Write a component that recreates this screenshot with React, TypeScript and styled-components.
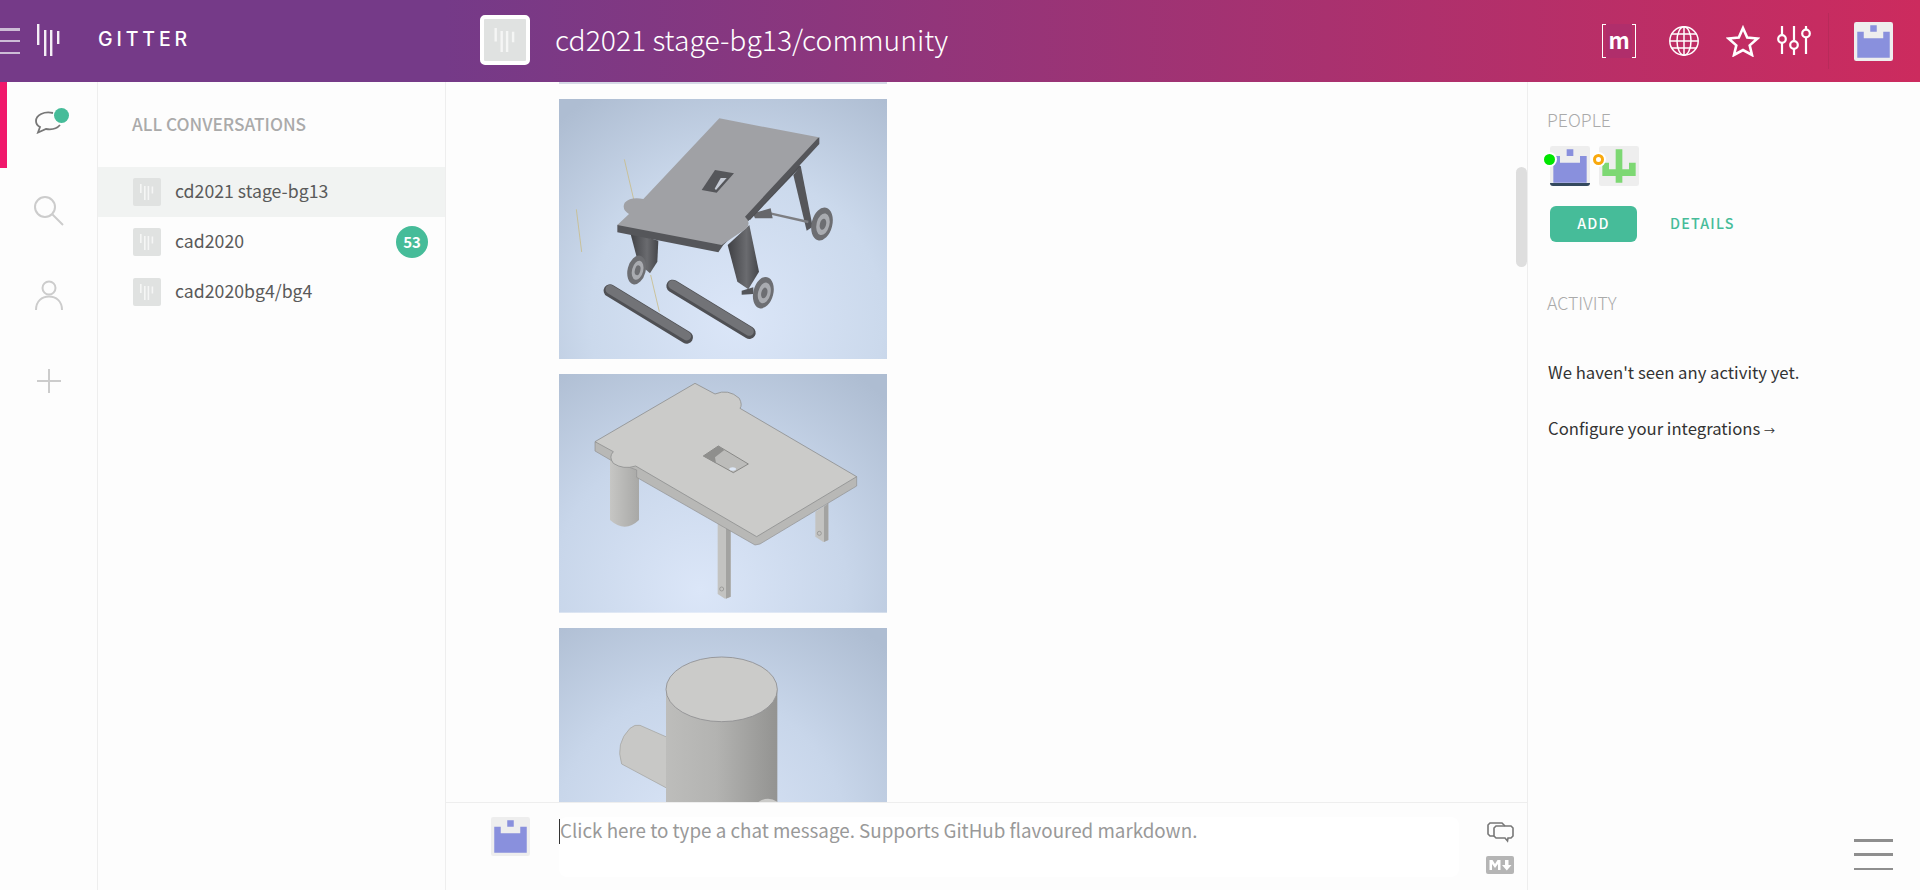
import React from 'react'
import styled, { createGlobalStyle } from 'styled-components'

const sans = `"Noto Sans CJK SC", "Noto Sans", sans-serif`

const GlobalStyle = createGlobalStyle`
  html, body, #root {
    height: 100%;
    margin: 0;
  }
  body {
    overflow: hidden;
    background: #fdfdfd;
    font-family: ${sans};
  }
`

const Page = styled.div`
  height: 100vh;
  display: flex;
  flex-direction: column;
`

const Header = styled.header`
  height: 82px;
  flex: none;
  display: flex;
  align-items: center;
  background: linear-gradient(to right, #753a88 445px, #cc2b5e 100%);
  color: #fff;
`

const Brand = styled.div`
  width: 445px;
  flex: none;
  display: flex;
  align-items: center;
`

const Hamburger = styled.div<{ $color: string; $width: number; $height: number }>`
  width: ${p => p.$width}px;
  height: ${p => p.$height}px;
  display: flex;
  flex-direction: column;
  justify-content: space-between;

  i {
    display: block;
    height: 2.5px;
    background: ${p => p.$color};
  }
`

const BrandMark = styled.svg`
  margin-left: 17px;
  width: 23px;
  height: 33px;
  margin-top: -1px;
`

const BrandName = styled.span`
  margin-left: 38px;
  padding-bottom: 4px;
  font-family: Inter, sans-serif;
  font-size: 19.5px;
  font-weight: 500;
  letter-spacing: 3.9px;
`

const RoomAvatar = styled.div`
  width: 50px;
  height: 50px;
  box-sizing: border-box;
  border: 4px solid #fff;
  border-radius: 5px;
  background: #e0e2e1;
  display: flex;
  align-items: center;
  justify-content: center;
  margin: 0 0 2px 35px;
`

const RoomTitle = styled.h1`
  margin: 0 0 6px 25px;
  font-size: 28.3px;
  font-weight: 300;
  flex: 1;
`

const HeaderIcons = styled.div`
  display: flex;
  align-items: center;
  height: 56px;
  margin-right: 27px;
`

const MatrixMark = styled.div`
  width: 34px;
  height: 34px;
  box-sizing: border-box;
  border: 1px solid #fff;
  position: relative;
  display: flex;
  align-items: center;
  justify-content: center;
  font-size: 22px;
  font-weight: 700;
  line-height: 1;
  margin-right: 32px;
  padding-bottom: 5px;

  &::before {
    content: '';
    position: absolute;
    top: -1px;
    bottom: -1px;
    left: 3px;
    right: 3px;
    background: #b02e6b;
  }

  span {
    position: relative;
  }
`

const HeaderIcon = styled.svg<{ $gap: number }>`
  margin-right: ${p => p.$gap}px;
  flex: none;
`

const HeaderDivider = styled.div`
  width: 1px;
  height: 56px;
  background: #b82a5a;
  margin: 0 25px 0 17px;
`

const Columns = styled.div`
  flex: 1;
  min-height: 0;
  display: flex;
`

const Rail = styled.nav`
  width: 98px;
  flex: none;
  box-sizing: border-box;
  border-right: 1px solid #eeeeee;
  display: flex;
  flex-direction: column;
`

const RailItem = styled.div<{ $active?: boolean }>`
  height: ${p => (p.$active ? 86 : 85)}px;
  display: flex;
  align-items: center;
  justify-content: center;
  position: relative;
  box-sizing: border-box;
  border-left: 7px solid ${p => (p.$active ? '#f0186b' : 'transparent')};
  padding-right: 7px;
  padding-bottom: ${p => (p.$active ? 6 : 0)}px;
`

const RailDot = styled.span`
  position: absolute;
  left: 47px;
  top: 26px;
  width: 15px;
  height: 15px;
  border-radius: 50%;
  background: #46bc99;
`

const RoomPanel = styled.aside`
  width: 348px;
  flex: none;
  box-sizing: border-box;
  border-right: 1px solid #eeeeee;
`

const PanelHeading = styled.h2`
  margin: 0;
  height: 85px;
  padding: 30px 0 0 34px;
  box-sizing: border-box;
  font-size: 17.3px;
  line-height: 24px;
  font-weight: 500;
  color: #aaaaaa;
`

const RoomRow = styled.div<{ $selected?: boolean }>`
  height: 50px;
  display: flex;
  align-items: center;
  padding: 0 17px 0 35px;
  background: ${p => (p.$selected ? '#f1f3f2' : 'transparent')};
  font-size: 17.7px;
  color: #5a5a5a;
`

const RoomIcon = styled.div`
  width: 28px;
  height: 28px;
  border-radius: 2px;
  background: #e0e2e1;
  display: flex;
  align-items: center;
  justify-content: center;
  margin-right: 14px;
  flex: none;
`

const RoomName = styled.span`
  flex: 1;
  padding-bottom: 5px;
`

const Badge = styled.span`
  width: 32px;
  height: 32px;
  box-sizing: border-box;
  padding-bottom: 2px;
  border-radius: 50%;
  background: #46bc99;
  color: #fff;
  font-size: 15px;
  font-weight: 700;
  display: flex;
  align-items: center;
  justify-content: center;
`

const Chat = styled.main`
  flex: 1;
  min-width: 0;
  display: flex;
  flex-direction: column;
  position: relative;
`

const Messages = styled.div`
  flex: 1;
  min-height: 0;
  overflow: hidden;
  padding-left: 113px;
  display: flex;
  flex-direction: column;
  gap: 15px;
`

const TopRule = styled.div`
  width: 328px;
  height: 2px;
  flex: none;
  background: #d5d9e6;
`

const Shot = styled.svg`
  display: block;
  width: 328px;
  flex: none;
`

const ScrollThumb = styled.div`
  position: absolute;
  right: 0;
  top: 85px;
  width: 11px;
  height: 100px;
  border-radius: 6px;
  background: #dedede;
`

const Composer = styled.div`
  height: 88px;
  flex: none;
  box-sizing: border-box;
  border-top: 1px solid #eeeeee;
  display: flex;
  padding: 14px 0 0 45px;
`

const ComposerAvatar = styled.div`
  width: 68px;
  flex: none;
`

const ComposerInput = styled.div`
  width: 900px;
  height: 60px;
  background: #ffffff;
  border-radius: 8px;
  display: flex;
  align-items: flex-start;
  font-size: 18.8px;
  line-height: 22px;
  color: #999999;
  padding-top: 2px;
  box-sizing: border-box;
`

const Caret = styled.span`
  width: 1px;
  height: 25px;
  background: #333;
  flex: none;
`

const ComposerTools = styled.div`
  margin-left: 27px;
  padding-top: 5px;
  display: flex;
  flex-direction: column;
  align-items: center;
  gap: 13px;
`

const InfoPanel = styled.aside`
  width: 393px;
  flex: none;
  box-sizing: border-box;
  border-left: 1px solid #eeeeee;
  padding: 25px 27px 20px 19px;
  display: flex;
  flex-direction: column;
`

const InfoHeading = styled.h3`
  margin: 0;
  font-size: 17.7px;
  line-height: 24px;
  font-weight: 300;
  color: #aaaaaa;
`

const People = styled.div`
  display: flex;
  gap: 9px;
  margin: 15px 0 20px 3px;
`

const Person = styled.div<{ $underlined?: boolean }>`
  position: relative;
  width: 40px;
  height: 40px;

  &::after {
    content: '';
    display: ${p => (p.$underlined ? 'block' : 'none')};
    position: absolute;
    left: 0;
    right: 0;
    bottom: 0;
    height: 3px;
    background: #34495e;
    border-radius: 0 0 3px 3px;
  }
`

const Presence = styled.span<{ $away?: boolean }>`
  position: absolute;
  left: -6px;
  top: 8px;
  width: 11px;
  height: 11px;
  box-sizing: border-box;
  border-radius: 50%;
  background: ${p => (p.$away ? '#fff' : '#00e600')};
  border: ${p => (p.$away ? '3px solid #f9a90d' : 'none')};
  box-shadow: 0 0 0 2px #fff;
`

const Actions = styled.div`
  display: flex;
  align-items: center;
  margin: 0 0 48px 3px;
  font-size: 14.3px;
  font-weight: 500;
  letter-spacing: 1.2px;
`

const AddButton = styled.button`
  width: 87px;
  height: 36px;
  border: none;
  border-radius: 6px;
  background: #46bc99;
  color: #fff;
  font: inherit;
  letter-spacing: inherit;
  padding: 0 0 3px;
`

const DetailsLink = styled.a`
  margin-left: 33px;
  padding-bottom: 4px;
  color: #46bc99;
`

const InfoText = styled.p<{ $top: number }>`
  margin: ${p => p.$top}px 0 0 1px;
  font-size: 16.7px;
  line-height: 26px;
  color: #333333;
`

const SmallArrow = styled.span`
  font-size: 11px;
`

const BottomMenu = styled.div`
  margin-top: auto;
  align-self: flex-end;
`

function LogoBars({ size, color }: { size: number; color: string }) {
  return (
    <svg width={size} height={size} viewBox="0 0 28 28">
      <g fill={color}>
        <rect x="7" y="6" width="1.6" height="9" />
        <rect x="11" y="8" width="1.6" height="14" />
        <rect x="14.6" y="8" width="1.6" height="14" />
        <rect x="18.6" y="8.5" width="1.6" height="7" />
      </g>
    </svg>
  )
}

const blue = ['00100', '10001', '11111', '11111', '11111']
const green = ['00100', '00100', '10101', '11111', '00100']

function Identicon({ rows, color, size }: { rows: string[]; color: string; size: number }) {
  const cells = rows
    .flatMap((row, y) =>
      row.split('').map((c, x) => (c === '1' ? `M${x + 0.5} ${y + 0.5}h1v1h-1z` : ''))
    )
    .join('')
  return (
    <svg width={size} height={size} viewBox="0 0 6 6" style={{ display: 'block' }}>
      <rect width="6" height="6" rx="0.35" fill="#eeeeee" />
      <path d={cells} fill={color} />
    </svg>
  )
}

function Wheel({ cx, cy, rx, ry }: { cx: number; cy: number; rx: number; ry: number }) {
  return (
    <g transform={`rotate(14 ${cx} ${cy})`}>
      <ellipse cx={cx} cy={cy} rx={rx} ry={ry} fill="#6d6e72" />
      <ellipse cx={cx + 3} cy={cy} rx={rx * 0.62} ry={ry * 0.66} fill="#a9abb0" />
      <ellipse cx={cx + 3} cy={cy} rx={rx * 0.3} ry={ry * 0.34} fill="#6d6e72" />
    </g>
  )
}

function TableShot() {
  return (
    <Shot viewBox="297 297 984 780" height={260}>
      <defs>
        <radialGradient id="bgA" gradientUnits="userSpaceOnUse" cx="830" cy="960" r="800">
          <stop offset="0" stopColor="#dbe6f8" />
          <stop offset="0.55" stopColor="#cbd9ec" />
          <stop offset="1" stopColor="#aebdd2" />
        </radialGradient>
        <linearGradient id="legA" x1="0" x2="1" y1="0" y2="0">
          <stop offset="0" stopColor="#3f4044" />
          <stop offset="0.6" stopColor="#6a6b6f" />
          <stop offset="1" stopColor="#45464a" />
        </linearGradient>
      </defs>
      <rect x="297" y="297" width="984" height="780" fill="url(#bgA)" />
      <g stroke="#c9bd8a" strokeWidth="2.5">
        <line x1="493" y1="478" x2="525" y2="615" />
        <line x1="349" y1="628" x2="365" y2="756" />
      </g>
      <path d="M510 695 L595 722 L592 785 L570 820 L535 790 Z" fill="url(#legA)" />
      <path d="M803 735 L868 675 L897 815 L865 868 L832 845 Z" fill="url(#legA)" />
      <path d="M845 872 L880 862 L880 882 L845 884 Z" fill="#55565a" />
      <path d="M1000 525 L1022 497 L1058 680 L1040 692 Z" fill="#55565a" />
      <line x1="930" y1="640" x2="1045" y2="666" stroke="#7d7e82" strokeWidth="7" />
      <path d="M878 640 L932 625 L938 655 L885 655 Z" fill="#66676b" />
      <path d="M1012 490 L1022 500 L870 660 L855 650 Z" fill="#4d4e52" />
      <Wheel cx={1086} cy={672} rx={31} ry={50} />
      <Wheel cx={910} cy={878} rx={30} ry={48} />
      <Wheel cx={530} cy={810} rx={27} ry={44} />
      <path d="M1078 412 L1078 432 L868 660 L790 735 L775 757 L472 697 L472 675 Z" fill="#55565a" />
      <path
        d="M778 355 L1076 412 L855 650 Q875 668 858 686 L785 735 L472 675 L507 642 Q484 628 494 608 Q512 590 550 597 Z"
        fill="#a0a1a5"
      />
      <path d="M765 510 L822 520 L770 578 L725 570 Z" fill="#55565a" />
      <path d="M782 534 L800 534 L768 570 L764 566 Z" fill="#c5cad4" />
      <g stroke="#4f5054" strokeWidth="38" strokeLinecap="round">
        <line x1="450" y1="872" x2="680" y2="1012" />
        <line x1="638" y1="858" x2="868" y2="998" />
      </g>
      <g stroke="#727377" strokeWidth="27" strokeLinecap="round">
        <line x1="450" y1="868" x2="680" y2="1008" />
        <line x1="638" y1="854" x2="868" y2="994" />
      </g>
      <line x1="572" y1="825" x2="598" y2="935" stroke="#c9bd8a" strokeWidth="2.5" />
    </Shot>
  )
}

function DeskShot() {
  return (
    <Shot viewBox="57 12 984 716" height={238.67}>
      <defs>
        <radialGradient id="bgB" gradientUnits="userSpaceOnUse" cx="480" cy="660" r="800">
          <stop offset="0" stopColor="#dbe6f8" />
          <stop offset="0.55" stopColor="#c8d6ea" />
          <stop offset="1" stopColor="#aebdd2" />
        </radialGradient>
        <linearGradient id="cylB" x1="0" x2="1" y1="0" y2="0">
          <stop offset="0" stopColor="#c6c6c4" />
          <stop offset="1" stopColor="#a8a8a6" />
        </linearGradient>
      </defs>
      <rect x="57" y="12" width="984" height="716" fill="url(#bgB)" />
      <path d="M210 270 L297 290 L297 450 Q255 490 210 450 Z" fill="url(#cylB)" />
      <path d="M533 460 L572 470 L572 680 L555 686 L533 672 Z" fill="#c3c3c1" />
      <path d="M558 470 L572 470 L572 680 L558 686 Z" fill="#a3a3a1" />
      <circle cx="545" cy="657" r="6" fill="none" stroke="#8a8a88" strokeWidth="2" />
      <path d="M826 425 L865 400 L865 510 L850 516 L826 500 Z" fill="#c3c3c1" />
      <path d="M852 410 L865 400 L865 510 L852 516 Z" fill="#a3a3a1" />
      <circle cx="838" cy="490" r="6" fill="none" stroke="#8a8a88" strokeWidth="2" />
      <path d="M165 215 L165 243 L215 272 L290 300 L290 322 L645 525 L660 522 L950 348 L950 320 Z" fill="#b8b8b6" stroke="#8f9090" strokeWidth="2" />
      <path
        d="M465 40 L525 72 Q565 55 598 85 Q608 105 600 115 L950 320 L650 500 L287 288 Q250 300 220 280 Q205 260 220 245 L165 215 Z"
        fill="#cbcbc9"
        stroke="#8f9090"
        strokeWidth="2.5"
      />
      <path d="M490 258 L535 228 L625 282 L580 308 Z" fill="#bcbcba" stroke="#7d7d7b" strokeWidth="2.5" />
      <path d="M490 258 L535 228 L553 240 L525 262 L528 280 Z" fill="#8f8f8d" />
      <ellipse cx="578" cy="297" rx="10" ry="5" fill="#dce6f5" />
    </Shot>
  )
}

function CylinderShot() {
  return (
    <Shot viewBox="57 24 984 716" height={238.67}>
      <defs>
        <radialGradient id="bgC" gradientUnits="userSpaceOnUse" cx="480" cy="660" r="800">
          <stop offset="0" stopColor="#dbe6f8" />
          <stop offset="0.55" stopColor="#c8d6ea" />
          <stop offset="1" stopColor="#aebdd2" />
        </radialGradient>
        <linearGradient id="cylC" x1="0" x2="1" y1="0" y2="0">
          <stop offset="0" stopColor="#bdbdbb" />
          <stop offset="0.45" stopColor="#b3b3b1" />
          <stop offset="1" stopColor="#939391" />
        </linearGradient>
      </defs>
      <rect x="57" y="24" width="984" height="716" fill="url(#bgC)" />
      <path d="M300 316 L400 360 L400 515 L245 432 Q225 370 270 325 Q285 312 300 316 Z" fill="#c8c8c6" stroke="#a0a09c" strokeWidth="2" />
      <rect x="378" y="208" width="334" height="532" fill="url(#cylC)" />
      <path d="M650 550 Q680 525 712 545 L712 600 L650 600 Z" fill="#cbcbc9" />
      <ellipse cx="545" cy="208" rx="167" ry="97" fill="#cbcbc9" stroke="#8e8e90" strokeWidth="2.5" />
    </Shot>
  )
}

export default function App() {
  return (
    <Page>
      <GlobalStyle />
      <Header>
        <Brand>
          <Hamburger $color="#cdbcd6" $width={20} $height={26}>
            <i />
            <i />
            <i />
          </Hamburger>
          <BrandMark viewBox="0 0 23 33">
            <g fill="#f4eff6">
              <rect x="0" y="0" width="2.4" height="21" />
              <rect x="7" y="6" width="2.4" height="26" />
              <rect x="13" y="6" width="2.4" height="26" />
              <rect x="20" y="7" width="2.4" height="13" />
            </g>
          </BrandMark>
          <BrandName>GITTER</BrandName>
        </Brand>
        <RoomAvatar>
          <LogoBars size={42} color="#f5f6f5" />
        </RoomAvatar>
        <RoomTitle>cd2021 stage-bg13/community</RoomTitle>
        <HeaderIcons>
          <MatrixMark>
            <span>m</span>
          </MatrixMark>
          <HeaderIcon $gap={26} width="32" height="32" viewBox="0 0 32 32" fill="none" stroke="#fff" strokeWidth="1.5">
            <circle cx="16" cy="16" r="14.2" />
            <ellipse cx="16" cy="16" rx="7" ry="14.2" />
            <line x1="16" y1="2" x2="16" y2="30" />
            <line x1="2" y1="16" x2="30" y2="16" />
            <path d="M4 9 H28 M4 23 H28" />
          </HeaderIcon>
          <HeaderIcon $gap={17} width="34" height="32" viewBox="0 0 34 32" fill="none" stroke="#fff" strokeWidth="2.6">
            <path d="M17 3 L21.2 12.6 L31.5 13.5 L23.7 20.4 L26 30 L17 25 L8 30 L10.3 20.4 L2.5 13.5 L12.8 12.6 Z" />
          </HeaderIcon>
          <HeaderIcon $gap={0} width="34" height="30" viewBox="0 0 34 30" fill="none" stroke="#fff" strokeWidth="2.2">
            <path d="M5 0 V9 M5 17 V28 M17 0 V14 M17 23 V29 M29 0 V3 M29 12 V28" />
            <circle cx="5" cy="13" r="3.8" />
            <circle cx="17" cy="19" r="3.8" />
            <circle cx="29" cy="7.5" r="3.8" />
          </HeaderIcon>
          <HeaderDivider />
          <Identicon rows={blue} color="#8990dd" size={39} />
        </HeaderIcons>
      </Header>
      <Columns>
        <Rail>
          <RailItem $active>
            <svg width="28" height="23" viewBox="0 0 28 23" fill="none" stroke="#777" strokeWidth="1.8">
              <path d="M18 2 C9 0 1 4 1 10 C1 13 3 15 5 16 L3 21.5 L11 18 C17 19 22 17.5 25 14" />
            </svg>
            <RailDot />
          </RailItem>
          <RailItem>
            <svg width="32" height="32" viewBox="0 0 32 32" fill="none" stroke="#cccccc" strokeWidth="2">
              <circle cx="12" cy="12" r="10" />
              <line x1="19.5" y1="19.5" x2="30" y2="30" />
            </svg>
          </RailItem>
          <RailItem>
            <svg width="30" height="32" viewBox="0 0 30 32" fill="none" stroke="#cccccc" strokeWidth="2">
              <circle cx="15" cy="8" r="6.5" />
              <path d="M2 30 C2 21 8 16.5 15 16.5 C22 16.5 28 21 28 30" />
            </svg>
          </RailItem>
          <RailItem>
            <svg width="24" height="24" viewBox="0 0 24 24" stroke="#cccccc" strokeWidth="2">
              <path d="M12 0 V24 M0 12 H24" />
            </svg>
          </RailItem>
        </Rail>
        <RoomPanel>
          <PanelHeading>ALL CONVERSATIONS</PanelHeading>
          <RoomRow $selected>
            <RoomIcon>
              <LogoBars size={28} color="#f5f6f5" />
            </RoomIcon>
            <RoomName>cd2021 stage-bg13</RoomName>
          </RoomRow>
          <RoomRow>
            <RoomIcon>
              <LogoBars size={28} color="#f5f6f5" />
            </RoomIcon>
            <RoomName>cad2020</RoomName>
            <Badge>53</Badge>
          </RoomRow>
          <RoomRow>
            <RoomIcon>
              <LogoBars size={28} color="#f5f6f5" />
            </RoomIcon>
            <RoomName>cad2020bg4/bg4</RoomName>
          </RoomRow>
        </RoomPanel>
        <Chat>
          <Messages>
            <TopRule />
            <TableShot />
            <DeskShot />
            <CylinderShot />
          </Messages>
          <ScrollThumb />
          <Composer>
            <ComposerAvatar>
              <Identicon rows={blue} color="#8990dd" size={39} />
            </ComposerAvatar>
            <ComposerInput>
              <Caret />
              Click here to type a chat message. Supports GitHub flavoured markdown.
            </ComposerInput>
            <ComposerTools>
              <svg width="27" height="21" viewBox="0 0 27 21" fill="none" stroke="#777" strokeWidth="1.6">
                <path d="M7 14 H3 L1 12 V3 L3 1 H15 L18 4" />
                <path d="M9 4 H24 L26 6 V14 L24 16 H21 L20.5 19 L18 16 H9 L7 14 V6 Z" />
              </svg>
              <svg width="28" height="18" viewBox="0 0 28 18">
                <rect width="28" height="18" rx="2" fill="#b5b5b5" />
                <path d="M3.5 14 V4 H6.5 L9 8 L11.5 4 H14.5 V14 H12 V8 L9 12 L6 8 V14 Z" fill="#fff" />
                <path d="M19 4 H22.5 V9 H25.5 L20.8 14.5 L16 9 H19 Z" fill="#fff" />
              </svg>
            </ComposerTools>
          </Composer>
        </Chat>
        <InfoPanel>
          <InfoHeading>PEOPLE</InfoHeading>
          <People>
            <Person $underlined>
              <Identicon rows={blue} color="#8990dd" size={40} />
              <Presence />
            </Person>
            <Person>
              <Identicon rows={green} color="#7dd873" size={40} />
              <Presence $away />
            </Person>
          </People>
          <Actions>
            <AddButton>ADD</AddButton>
            <DetailsLink>DETAILS</DetailsLink>
          </Actions>
          <InfoHeading>ACTIVITY</InfoHeading>
          <InfoText $top={45}>We haven't seen any activity yet.</InfoText>
          <InfoText $top={30}>
            Configure your integrations <SmallArrow>→</SmallArrow>
          </InfoText>
          <BottomMenu>
            <Hamburger $color="#8e8e8e" $width={39} $height={31}>
              <i />
              <i />
              <i />
            </Hamburger>
          </BottomMenu>
        </InfoPanel>
      </Columns>
    </Page>
  )
}
